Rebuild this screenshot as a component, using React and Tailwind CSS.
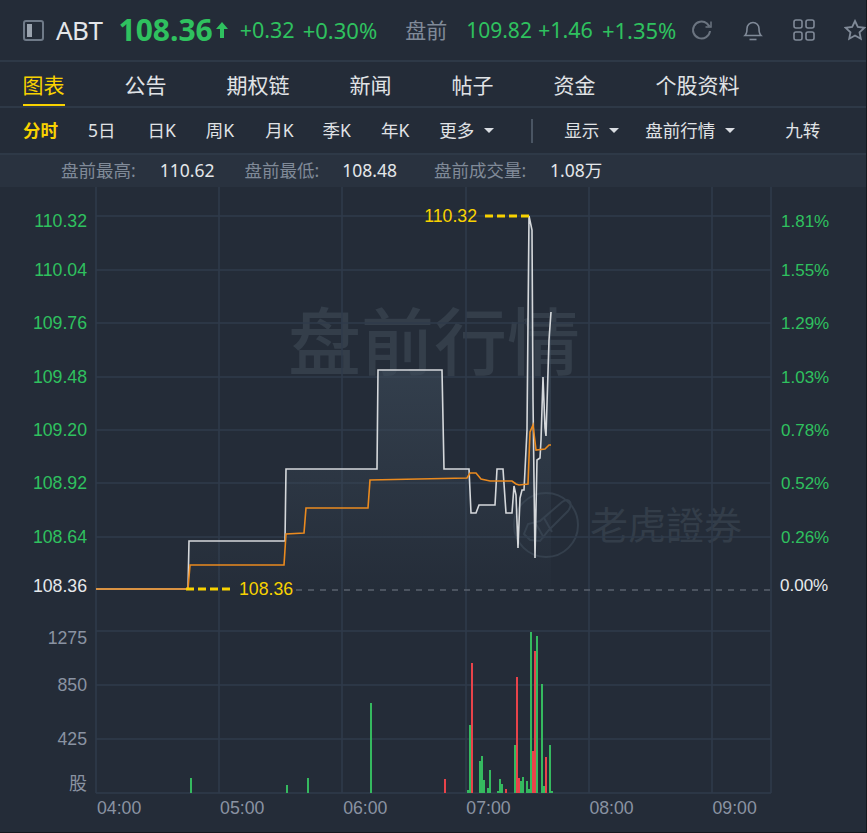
import React from 'react';

const cjk = '"Noto Sans", "Noto Sans CJK SC", sans-serif';
const arial = '"Liberation Sans", "Noto Sans CJK SC", sans-serif';

const whiteLine = [
  [96, 589], [188, 589], [189, 541], [285, 541], [286, 469], [377, 469], [378, 370], [442, 370], [444, 469],
  [469, 469], [471, 513], [476, 513], [479, 505], [495, 505], [497, 469], [503, 469], [506, 513], [512, 513],
  [514, 486], [516, 495], [518, 548], [520, 498], [522, 490], [524, 490], [527, 430], [529, 216], [532, 230],
  [533, 400], [535, 558], [537, 460], [540, 458], [541, 440], [543, 377], [545, 428], [546, 436], [549, 340], [551, 312],
];

const orangeLine = [
  [96, 589], [188, 589], [190, 565], [284, 565], [286, 534], [304, 533], [306, 508], [368, 508], [370, 480],
  [467, 478], [470, 473], [476, 473], [481, 479], [490, 481], [512, 481], [516, 484], [519, 485], [528, 484],
  [530, 432], [533, 425], [536, 450], [545, 449], [549, 445], [551, 445],
];

// x, top of the bar, green or red
const bars = [
  [190, 778, 'g'], [286, 785, 'g'], [307, 778, 'g'], [370, 703, 'g'], [444, 779, 'r'], [467, 790, 'g'], [469, 725, 'g'],
  [471, 663, 'r'], [479, 761, 'g'], [481, 756, 'g'], [483, 780, 'g'], [487, 788, 'g'], [489, 770, 'g'], [497, 791, 'g'],
  [499, 779, 'g'], [501, 784, 'g'], [505, 789, 'r'], [514, 745, 'g'], [516, 677, 'r'], [518, 778, 'r'], [520, 781, 'g'],
  [522, 777, 'g'], [526, 781, 'g'], [528, 789, 'g'], [530, 632, 'g'], [532, 751, 'r'], [534, 651, 'r'], [536, 636, 'g'],
  [541, 684, 'g'], [543, 786, 'g'], [545, 757, 'r'], [549, 745, 'g'], [551, 791, 'g'],
];

const priceRows = [
  ['110.32', '1.81%', 221], ['110.04', '1.55%', 270], ['109.76', '1.29%', 323], ['109.48', '1.03%', 377],
  ['109.20', '0.78%', 430], ['108.92', '0.52%', 483], ['108.64', '0.26%', 537],
];

const toPoints = (pts) => pts.map((p) => p.join(',')).join(' ');

const Caret = () => (
  <span className="ml-[10px] inline-block h-0 w-0 border-x-[5px] border-t-[5px] border-x-transparent border-t-[#d9dde2]" />
);

const Chart = () => (
  <svg className="block" width="866" height="645" viewBox="0 187 866 645" style={{ fontFamily: arial }}>
    <defs>
      <linearGradient id="area" x1="0" y1="370" x2="0" y2="590" gradientUnits="userSpaceOnUse">
        <stop offset="0" stopColor="#3d4b5a" stopOpacity="0.6" />
        <stop offset="1" stopColor="#3d4b5a" stopOpacity="0.03" />
      </linearGradient>
    </defs>

    <text x="288" y="369" fontSize="73" fontWeight="500" fill="#343e4a" style={{ fontFamily: cjk }}>盘前行情</text>
    <text x="590" y="539" fontSize="38" fill="#333d49" style={{ fontFamily: cjk }}>老虎證券</text>
    <g fill="none" stroke="#343f4c" strokeWidth="2">
      <circle cx="546" cy="525" r="32" />
      <path d="M530 540l-6-6 4-10 12-3 22-19q6-4 8 0t-2 9l-20 20-8 10z" />
      <path d="M536 524l8 14M544 518l8 14" />
    </g>

    <g stroke="#2f3b4b" strokeWidth="1.5" fill="none">
      {[216, 270, 323, 377, 430, 483, 537, 631, 685, 739, 793].map((y) => (
        <line key={y} x1="96" x2="771" y1={y} y2={y} />
      ))}
      {[96, 219, 342, 466, 589, 712, 771].map((x) => (
        <line key={x} x1={x} x2={x} y1="187" y2="793" />
      ))}
    </g>

    <polygon points={`${toPoints(whiteLine)} 551,590 96,590`} fill="url(#area)" />
    <line x1="296" x2="771" y1="590" y2="590" stroke="#5a626d" strokeWidth="1.5" strokeDasharray="6 6" />

    <polyline points={toPoints(whiteLine)} fill="none" stroke="#d5d8db" strokeWidth="1.6" />
    <polyline points={toPoints(orangeLine)} fill="none" stroke="#ea8a1f" strokeWidth="1.6" />

    <line x1="485" x2="529" y1="216" y2="216" stroke="#f8d200" strokeWidth="3" strokeDasharray="8 4" />
    <text x="477" y="222" textAnchor="end" fontSize="17.700" fill="#f8d200">110.32</text>
    <line x1="186" x2="232" y1="589" y2="589" stroke="#f8d200" strokeWidth="3" strokeDasharray="8 4" />
    <text x="239" y="595" fontSize="17.700" fill="#f8d200">108.36</text>

    {bars.map(([x, top, c]) => (
      <rect key={x} x={x} y={top} width="2" height={793 - top} fill={c === 'g' ? '#35b95f' : '#e8434a'} />
    ))}

    {priceRows.map(([price, pct, y]) => (
      <g key={price} fontSize="17.700" fill="#2fc15f">
        <text x="87" y={y + 6} textAnchor="end">{price}</text>
        <text x="781" y={y + 6} fontSize="17">{pct}</text>
      </g>
    ))}
    <text x="87" y="592" textAnchor="end" fontSize="17.700" fill="#e6e9ec">108.36</text>
    <text x="780" y="591" fontSize="17" fill="#e6e9ec">0.00%</text>

    <g fontSize="17.700" fill="#8a93a2">
      <text x="87" y="644" textAnchor="end">1275</text>
      <text x="87" y="691" textAnchor="end">850</text>
      <text x="87" y="745" textAnchor="end">425</text>
      <text x="87" y="790" textAnchor="end" fontSize="18" style={{ fontFamily: cjk }}>股</text>
      {['04:00', '05:00', '06:00', '07:00', '08:00', '09:00'].map((t, i) => (
        <text key={t} x={97 + i * 123.1} y="814">{t}</text>
      ))}
    </g>
  </svg>
);

export default function App() {
  return (
    <div
      className="h-[833px] w-[867px] overflow-hidden border-r border-b border-[#14181e] bg-[#242c38] text-[#e0e3e6]"
      style={{ fontFamily: cjk }}
    >
      {/* Quote header */}
      <div className="flex h-[62px] items-center overflow-hidden border-b-2 border-[#2e3947] pl-[23px] whitespace-nowrap">
        <span className="flex h-[21px] w-[21px] shrink-0 items-center rounded-[3px] border-2 border-[#6f7a88] pl-[2px]">
          <span className="h-[13px] w-[5px] bg-[#9aa3ae]" />
        </span>
        <span className="ml-[12px] text-[26px] leading-none tracking-[-0.5px] text-[#e4e7ea]">ABT</span>
        <span className="ml-[16px] text-[30px] leading-none font-bold text-[#2fc15f]">108.36</span>
        <svg width="14" height="18" viewBox="0 0 14 18" className="ml-[2px] shrink-0" fill="#2fc15f">
          <path d="M7 1l6 7H9v9H5V8H1z" />
        </svg>
        <span className="ml-[11px] text-[21.500px] leading-none text-[#2fc15f]">+0.32</span>
        <span className="ml-[8px] text-[22px] leading-none text-[#2fc15f]">+0.30%</span>
        <span className="ml-[28px] text-[21px] leading-none text-[#808a98]">盘前</span>
        <span className="ml-[19px] text-[21px] leading-none text-[#2fc15f]">109.82</span>
        <span className="ml-[6px] text-[21.500px] leading-none text-[#2fc15f]">+1.46</span>
        <span className="ml-[9px] text-[22px] leading-none text-[#2fc15f]">+1.35%</span>
        <svg width="22" height="22" viewBox="0 0 22 22" fill="none" stroke="#6b7480" strokeWidth="2" className="ml-[15px] shrink-0">
          <path d="M19 12a8.500 8.500 0 1 1-3-7.500l2.500 3" />
          <path d="M20 2.500v5.500h-5.500" strokeWidth="1.500" />
        </svg>
        <svg width="22" height="22" viewBox="0 0 22 22" fill="none" stroke="#808a98" strokeWidth="1.600" className="ml-[29px] shrink-0">
          <path d="M3 16.500h16c-2-2-2-4-2-7a6 6 0 0 0-12 0c0 3 0 5-2 7z" />
          <path d="M7.500 20.500h7" />
        </svg>
        <svg width="22" height="22" viewBox="0 0 22 22" fill="none" stroke="#808a98" strokeWidth="1.600" className="ml-[29px] shrink-0">
          <rect x="1" y="1" width="8" height="8" rx="2" />
          <rect x="13" y="1" width="8" height="8" rx="2" />
          <rect x="1" y="13" width="8" height="8" rx="2" />
          <rect x="13" y="13" width="8" height="8" rx="2" />
        </svg>
        <svg width="22" height="22" viewBox="0 0 22 22" fill="none" stroke="#808a98" strokeWidth="1.800" className="ml-[29px] shrink-0">
          <path d="M11 2l2.800 6 6.500.8-4.800 4.500 1.300 6.500L11 16.500 5.200 19.800l1.300-6.500L1.700 8.800 8.200 8z" />
        </svg>
      </div>

      {/* Tabs */}
      <div className="flex h-[46px] gap-[60px] border-b-2 border-[#2e3947] pl-[22.500px] text-[21px] leading-none">
        <span className="h-[44px] border-b-2 border-[#f8d200] pt-[13px] text-[#f8d200]">图表</span>
        {['公告', '期权链', '新闻', '帖子', '资金', '个股资料'].map((t) => (
          <span key={t} className="pt-[13px]">{t}</span>
        ))}
      </div>

      {/* Period toolbar */}
      <div className="flex h-[47px] items-center border-b-2 border-[#2e3947] pl-[23px] text-[17.500px] leading-none">
        <span className="font-bold text-[#f8d200]">分时</span>
        <span className="ml-[30px]">5日</span>
        <span className="ml-[32px]">日K</span>
        <span className="ml-[30px]">周K</span>
        <span className="ml-[31px]">月K</span>
        <span className="ml-[29px]">季K</span>
        <span className="ml-[30px]">年K</span>
        <span className="ml-[30px]">更多</span>
        <Caret />
        <span className="ml-[37px] h-[24px] w-[2px] bg-[#4a5563]" />
        <span className="ml-[31px]">显示</span>
        <Caret />
        <span className="ml-[26px]">盘前行情</span>
        <Caret />
        <span className="ml-[50px]">九转</span>
      </div>

      {/* Pre-market stats */}
      <div className="flex h-[32px] items-center bg-[#29323f] pl-[61px] text-[17.500px] leading-none">
        <span className="text-[#808a98]">盘前最高:</span>
        <span className="ml-[24px] text-[#e4e7ea]">110.62</span>
        <span className="ml-[30px] text-[#808a98]">盘前最低:</span>
        <span className="ml-[23px] text-[#e4e7ea]">108.48</span>
        <span className="ml-[37px] text-[#808a98]">盘前成交量:</span>
        <span className="ml-[24px] text-[#e4e7ea]">1.08万</span>
      </div>

      <Chart />
    </div>
  );
}
